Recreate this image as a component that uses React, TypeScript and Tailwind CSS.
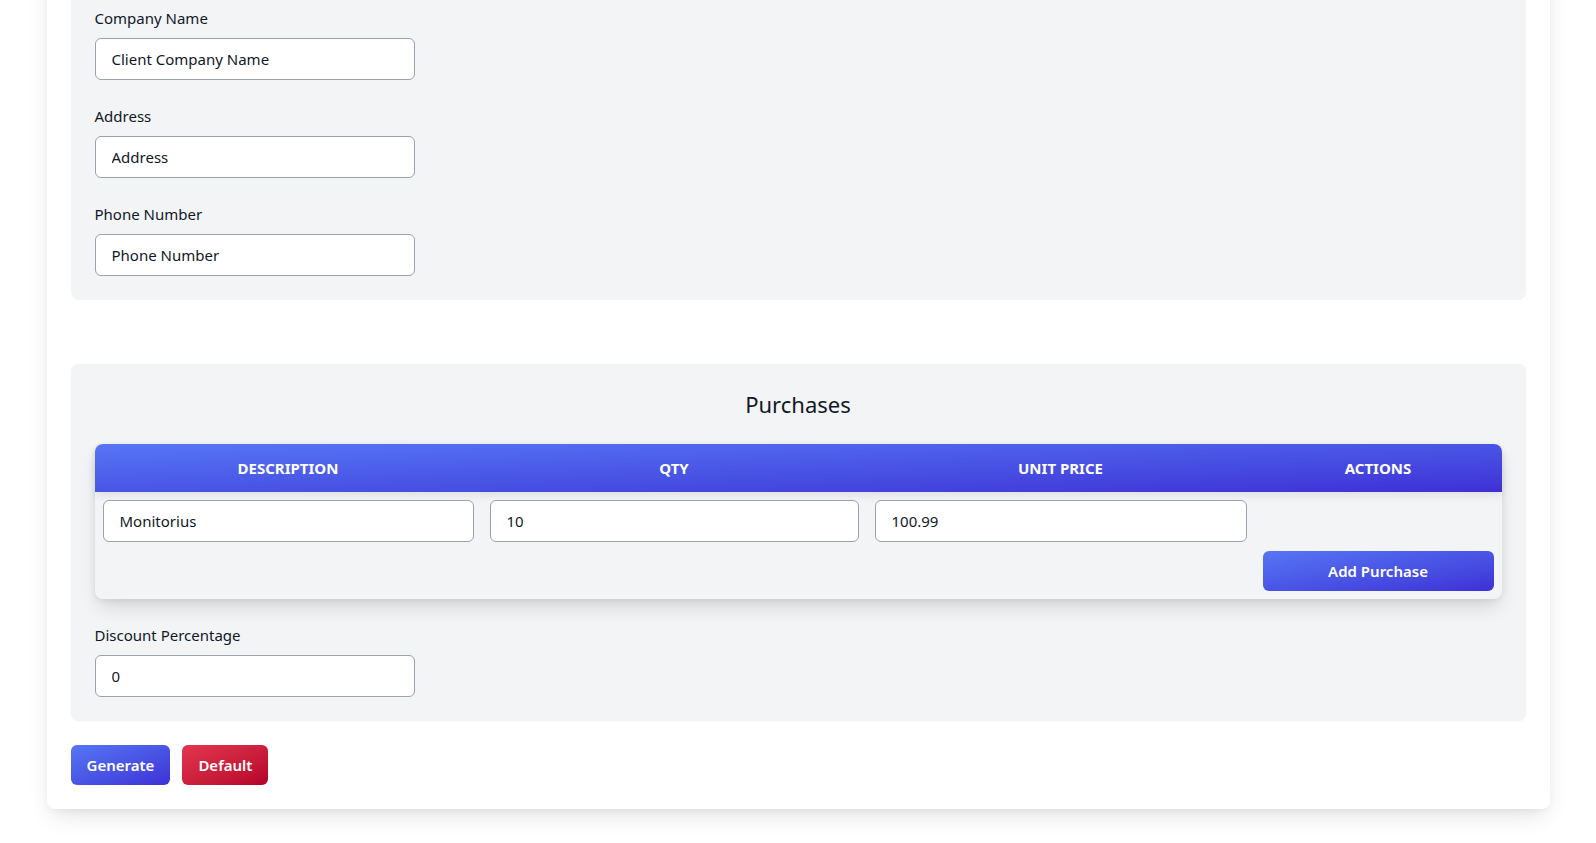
import { useState } from "react";

type Purchase = {
  description: string;
  qty: string;
  unitPrice: string;
};

const inputClass =
  "h-[42px] w-full rounded-md border border-gray-400 bg-white px-4 text-[15px] text-gray-900 outline-none focus:border-indigo-500";

function Field({ label, value, onChange, placeholder }: { label: string; value: string; onChange: (v: string) => void; placeholder?: string }) {
  return (
    <label className="block">
      <span className="mb-2 block text-[15px] leading-6 text-gray-900">{label}</span>
      <div className="w-[320px]">
        <input value={value} placeholder={placeholder} onChange={(e) => onChange(e.target.value)} className={inputClass} />
      </div>
    </label>
  );
}

export default function App() {
  const [company, setCompany] = useState("Client Company Name");
  const [address, setAddress] = useState("Address");
  const [phone, setPhone] = useState("Phone Number");
  const [discount, setDiscount] = useState("0");
  const [purchases, setPurchases] = useState<Purchase[]>([{ description: "Monitorius", qty: "10", unitPrice: "100.99" }]);

  function updatePurchase(index: number, key: keyof Purchase, value: string) {
    setPurchases((prev) => prev.map((p, i) => (i === index ? { ...p, [key]: value } : p)));
  }

  return (
    <div className="min-h-screen overflow-hidden bg-white pb-12 font-['Noto_Sans',sans-serif] text-gray-900">
      <div className="mx-auto -mt-[42px] w-[1503px] rounded-lg bg-white p-6 shadow-[0_10px_25px_-5px_rgba(0,0,0,0.12),0_4px_10px_-4px_rgba(0,0,0,0.08)]">
        <section className="space-y-6 rounded-lg bg-gray-100 p-6">
          <Field label="Company Name" value={company} onChange={setCompany} />
          <Field label="Address" value={address} onChange={setAddress} />
          <Field label="Phone Number" value={phone} onChange={setPhone} />
        </section>

        <section className="mt-16 rounded-lg bg-gray-100 p-6 shadow-[0_0_2px_rgba(0,0,0,0.06)]">
          <h2 className="mb-6 text-center text-[22px] leading-8 text-gray-900">Purchases</h2>

          <div className="rounded-lg bg-gray-100 shadow-[0_10px_20px_-4px_rgba(0,0,0,0.15),0_2px_6px_rgba(0,0,0,0.06)]">
            <div className="grid h-12 grid-cols-[387px_385px_388px_1fr] items-center rounded-t-lg bg-gradient-to-br from-[#5775f4] to-[#3f2fd6] text-center text-[15px] font-bold uppercase text-white shadow-[0_4px_8px_rgba(0,0,0,0.08)]">
              <div>Description</div>
              <div>Qty</div>
              <div>Unit Price</div>
              <div>Actions</div>
            </div>
            {purchases.map((p, i) => (
              <div key={i} className="grid grid-cols-[387px_385px_388px_1fr]">
                <div className="px-2 pt-2">
                  <input value={p.description} onChange={(e) => updatePurchase(i, "description", e.target.value)} className={inputClass} />
                </div>
                <div className="px-2 pt-2">
                  <input value={p.qty} onChange={(e) => updatePurchase(i, "qty", e.target.value)} className={inputClass} />
                </div>
                <div className="px-2 pt-2">
                  <input value={p.unitPrice} onChange={(e) => updatePurchase(i, "unitPrice", e.target.value)} className={inputClass} />
                </div>
                <div />
              </div>
            ))}
            <div className="grid grid-cols-[387px_385px_388px_1fr]">
              <div className="col-start-4 px-2 pb-2 pt-[9px]">
                <button
                  type="button"
                  onClick={() => setPurchases((prev) => [...prev, { description: "", qty: "", unitPrice: "" }])}
                  className="h-10 w-full rounded-md bg-gradient-to-br from-[#5775f4] to-[#3f2fd6] text-[15px] font-semibold text-white"
                >
                  Add Purchase
                </button>
              </div>
            </div>
          </div>

          <div className="mt-6">
            <Field label="Discount Percentage" value={discount} onChange={setDiscount} />
          </div>
        </section>

        <div className="mt-6 flex gap-3">
          <button type="button" className="h-10 rounded-md bg-gradient-to-br from-[#5775f4] to-[#3f2fd6] px-4 text-[15px] font-semibold text-white">
            Generate
          </button>
          <button type="button" className="h-10 rounded-md bg-gradient-to-br from-[#e3354f] to-[#b5002a] px-4 text-[15px] font-semibold text-white">
            Default
          </button>
        </div>
      </div>
    </div>
  );
}
